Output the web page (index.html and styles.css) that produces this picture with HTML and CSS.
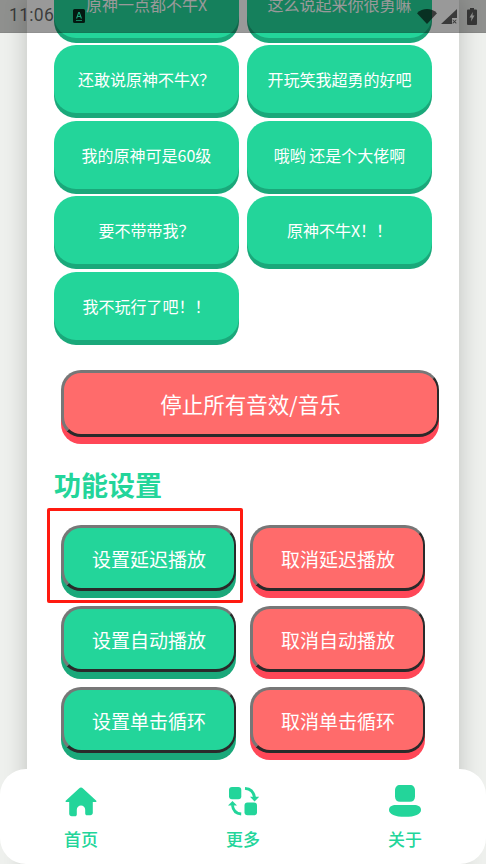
FILE: index.html
```html
<!DOCTYPE html>
<html lang="zh-CN">
<head>
<meta charset="utf-8">
<title>原神音效</title>
<link rel="stylesheet" href="styles.css">
</head>
<body>
<div class="screen">
  <main class="card">
    <div class="sound-grid">
      <button class="chip">原神一点都不牛X</button>
      <button class="chip">这么说起来你很勇嘛</button>
      <button class="chip">还敢说原神不牛X？</button>
      <button class="chip">开玩笑我超勇的好吧</button>
      <button class="chip">我的原神可是60级</button>
      <button class="chip">哦哟 还是个大佬啊</button>
      <button class="chip">要不带带我？</button>
      <button class="chip">原神不牛X！！</button>
      <button class="chip">我不玩行了吧！！</button>
    </div>
    <button class="action danger stop">停止所有音效/音乐</button>
    <h2 class="section-title">功能设置</h2>
    <div class="settings-grid">
      <button class="action primary highlighted">设置延迟播放<span class="marker"></span></button>
      <button class="action danger">取消延迟播放</button>
      <button class="action primary">设置自动播放</button>
      <button class="action danger">取消自动播放</button>
      <button class="action primary">设置单击循环</button>
      <button class="action danger">取消单击循环</button>
    </div>
  </main>

  <header class="status-bar">
    <span class="time">11:06</span>
    <svg class="ic-a" viewBox="0 0 12 14"><path class="dark" d="M0 1.500A1.500 1.500 0 0 1 1.500 0h9A1.500 1.500 0 0 1 12 1.500v11A1.500 1.500 0 0 1 10.500 14h-9A1.500 1.500 0 0 1 0 12.500z"/><path class="glyph" d="M3 9.500 5.300 3h1.400L9 9.500H7.800L7.300 8H4.700l-.5 1.500zM5 7h2L6 4.200zM3 11h6v.8H3z"/></svg>
    <span class="status-icons">
      <svg class="ic-wifi" viewBox="0 0 20 15"><path class="dark" d="M0 4.200C5.500-1.400 14.500-1.400 20 4.200L10 15z"/></svg>
      <svg class="ic-signal" viewBox="0 0 16 15"><path class="dark" d="M16 0v9h-5v6H0z"/><path class="dark" d="m12 10.500 1.500 1.500 1.500-1.500.6.600L14.100 12.600l1.500 1.500-.6.600-1.500-1.500-1.500 1.500-.6-.6 1.500-1.500-1.500-1.500z"/></svg>
      <svg class="ic-batt" viewBox="0 0 10 17"><path class="dark" fill-rule="evenodd" d="M3 0h4v1.500h2a1 1 0 0 1 1 1V16a1 1 0 0 1-1 1H1a1 1 0 0 1-1-1V2.500a1 1 0 0 1 1-1h2zM5.800 4 2.500 9.500h2L4 13.500l3.500-6h-2z"/></svg>
    </span>
  </header>

  <nav class="tabbar">
    <a class="tab">
      <svg class="tab-icon" viewBox="0 0 32 33"><path d="M16 3.500c.8 0 1.400.3 2 .9L31.300 16.800c.5.500.2 1.200-.5 1.200H27.800v10.800c0 1.400-1.100 2.500-2.500 2.500H22c-1 0-1.800-.8-1.800-1.800V25.800c0-2.300-1.900-4.200-4.200-4.200s-4.200 1.900-4.200 4.200v4.700c0 1-.8 1.800-1.800 1.800H6.700c-1.400 0-2.500-1.100-2.500-2.500V18H1.200c-.7 0-1-.7-.5-1.200L14 4.400c.6-.6 1.200-.9 2-.9z"/></svg>
      <span>首页</span>
    </a>
    <a class="tab">
      <svg class="tab-icon" viewBox="0 0 32 33"><rect x="2" y="3" width="12.300" height="12.300" rx="3"/><rect x="17.500" y="18.500" width="12.500" height="12.800" rx="3"/><path class="arc" d="M18 4.300c5 .3 8.700 3.600 9.500 9"/><path d="M23 12.800h9.200L27.600 17.500z"/><path class="arc" d="M14.200 30c-5-.3-8.200-3.400-8.800-8.800"/><path d="M1 21.500h9L5.500 17z"/></svg>
      <span>更多</span>
    </a>
    <a class="tab">
      <svg class="tab-icon" viewBox="0 0 32 33"><path d="M6 6.500C6 3 8 1 11 1h10c3 0 5 2 5 5.500v6c0 3.500-2 5.200-5 5.200H11c-3 0-5-1.700-5-5.200z"/><path d="M7 21h18c4 0 7 1.400 7 4.900 0 4-6 6.900-16 6.900S0 29.900 0 25.900C0 22.400 3 21 7 21z"/></svg>
      <span>关于</span>
    </a>
  </nav>
</div>
</body>
</html>
```

FILE: styles.css
```css
* { box-sizing: border-box; }
html, body { margin: 0; padding: 0; }
body {
  font-family: "Noto Sans CJK SC", "Noto Sans", Roboto, sans-serif;
  background: #eef0ed;
}
.screen {
  position: relative;
  width: 486px;
  height: 864px;
  overflow: hidden;
  background: #eef0ed;
}
.card {
  width: 432px;
  margin: 0 27px;
  height: 900px;
  padding: 0 27px;
  background: #fff;
  box-shadow: 0 0 22px rgba(0, 0, 0, .2);
}
.sound-grid {
  display: grid;
  grid-template-columns: 185px 185px;
  column-gap: 8px;
  row-gap: 2.6px;
  position: relative;
  top: -30.5px;
}
.chip {
  height: 68px;
  margin-bottom: 5px;
  border: 0;
  border-radius: 22px;
  padding: 0;
  font: 400 16px/1 "Noto Sans CJK SC", sans-serif;
  color: #fff;
  background: #23d59a;
  box-shadow: 0 5px 0 #1aa87a;
}
.action {
  display: block;
  position: relative;
  padding: 2px 0 0;
  border-style: solid;
  border-width: 3px 2px 3px 3px;
  border-color: #777 #2a2a2a #2a2a2a #777;
  border-radius: 20px;
  color: #fff;
  font: 400 19px/1 "Noto Sans CJK SC", sans-serif;
  height: 66px;
}
.primary { background: #23d59a; box-shadow: 0 7px 0 #1aa87a; }
.danger { background: #ff6b6b; box-shadow: 0 7px 0 #ff4757; }
.stop {
  width: 378px;
  height: 67px;
  margin: -5.500px 0 0 7px;
  padding: 0;
  font-size: 21.500px;
}
.section-title {
  margin: 30px 0 0;
  font: 700 27px/36px "Noto Sans CJK SC", sans-serif;
  color: #23d59a;
}
.settings-grid {
  display: grid;
  grid-template-columns: 175px 175px;
  column-gap: 14px;
  row-gap: 15px;
  margin: 22px 0 0 7px;
}
.marker {
  position: absolute;
  left: -17px;
  top: -20px;
  width: 196px;
  height: 95px;
  border: 3px solid #ff1a10;
  border-radius: 2px;
}
.status-bar {
  position: absolute;
  left: 0;
  top: 0;
  width: 100%;
  height: 33px;
  display: flex;
  align-items: center;
  padding: 0 9px;
  background: rgba(0, 0, 0, .4);
  border-bottom: 1px solid rgba(0, 0, 0, .05);
}
.time {
  font: 400 17.500px/1 Roboto, sans-serif;
  color: rgba(0, 0, 0, .62);
  letter-spacing: .3px;
}
.ic-a { width: 12px; height: 14px; margin-left: 19px; }
.status-icons { display: flex; align-items: center; margin-left: auto; }
.dark { fill: rgba(0, 0, 0, .62); }
.ic-a .dark { fill: rgba(0, 0, 0, .8); }
.glyph { fill: #1aa87a; }
.ic-wifi { width: 20px; height: 15px; }
.ic-signal { width: 16px; height: 15px; margin-left: 4px; }
.ic-batt { width: 10px; height: 17px; margin-left: 10px; }
.tabbar {
  position: absolute;
  left: 0;
  bottom: 0;
  width: 486px;
  height: 95px;
  display: grid;
  grid-template-columns: repeat(3, 1fr);
  background: #fff;
  border-radius: 26px;
}
.tab {
  display: flex;
  flex-direction: column;
  align-items: center;
  padding-top: 15px;
  color: #23d59a;
  font: 500 17px/24px "Noto Sans CJK SC", sans-serif;
}
.tab-icon { width: 32px; height: 33px; fill: #23d59a; margin-bottom: 10px; }
.tab-icon .arc { fill: none; stroke: #23d59a; stroke-width: 2.800; }
```
